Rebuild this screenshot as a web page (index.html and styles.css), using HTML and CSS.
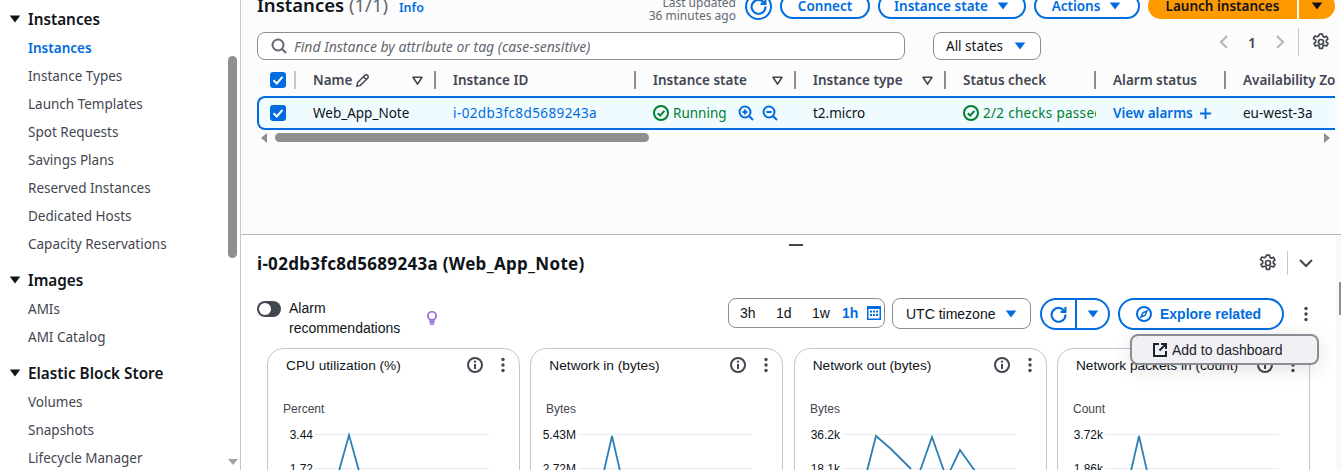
FILE: index.html
```html
<!DOCTYPE html>
<html lang="en">
<head>
    <meta charset="UTF-8">
    <title>Instances | EC2</title>
    <link rel="stylesheet" href="styles.css">
</head>
<body>

    <!-- Shared icons -->
    <svg class="icon-defs" width="0" height="0">
        <symbol id="i-caret" viewBox="0 0 16 16"><path d="M2 4h12L8 12z" fill="currentColor"/></symbol>
        <symbol id="i-filter" viewBox="0 0 16 16"><path d="M2.5 4h11L8 12.5z" fill="none" stroke="currentColor" stroke-width="2" stroke-linejoin="round"/></symbol>
        <symbol id="i-check" viewBox="0 0 16 16"><path d="M3.5 8.3 6.8 11.5 12.5 4.8" fill="none" stroke="#fff" stroke-width="2"/></symbol>
        <symbol id="i-ok" viewBox="0 0 16 16"><circle cx="8" cy="8" r="7" fill="none" stroke="currentColor" stroke-width="2"/><path d="M4.8 8.2 7.2 10.6 11.4 5.8" fill="none" stroke="currentColor" stroke-width="2"/></symbol>
        <symbol id="i-gear" viewBox="0 0 16 16"><path d="M6.7 1h2.6l.4 2 1.2.7 2-.7 1.3 2.3-1.5 1.3v1.4l1.5 1.3-1.3 2.3-2-.7-1.2.7-.4 2H6.7l-.4-2-1.2-.7-2 .7-1.3-2.3 1.5-1.3V6.3L1.3 5 2.6 2.7l2 .7 1.2-.7z" fill="none" stroke="currentColor" stroke-width="1.5" stroke-linejoin="round"/><circle cx="8" cy="8" r="2.2" fill="none" stroke="currentColor" stroke-width="1.5"/></symbol>
        <symbol id="i-info" viewBox="0 0 16 16"><circle cx="8" cy="8" r="7" fill="none" stroke="currentColor" stroke-width="2"/><path d="M8 7v5" stroke="currentColor" stroke-width="2"/><circle cx="8" cy="4.6" r="1.2" fill="currentColor"/></symbol>
        <symbol id="i-kebab" viewBox="0 0 16 16"><circle cx="8" cy="2.5" r="1.7" fill="currentColor"/><circle cx="8" cy="8" r="1.7" fill="currentColor"/><circle cx="8" cy="13.5" r="1.7" fill="currentColor"/></symbol>
        <symbol id="i-refresh" viewBox="0 0 16 16"><path d="M13.6 5A6.5 6.5 0 1 0 14.5 8" fill="none" stroke="currentColor" stroke-width="2"/><path d="M14.5 1v4.500H10" fill="none" stroke="currentColor" stroke-width="2"/></symbol>
    </svg>

    <div class="console">

        <!-- Left navigation -->
        <nav class="sidenav">
            <div class="nav-group"><svg class="nav-caret"><use href="#i-caret"/></svg>Instances</div>
            <a class="nav-link active">Instances</a>
            <a class="nav-link">Instance Types</a>
            <a class="nav-link">Launch Templates</a>
            <a class="nav-link">Spot Requests</a>
            <a class="nav-link">Savings Plans</a>
            <a class="nav-link">Reserved Instances</a>
            <a class="nav-link">Dedicated Hosts</a>
            <a class="nav-link">Capacity Reservations</a>
            <div class="nav-group"><svg class="nav-caret"><use href="#i-caret"/></svg>Images</div>
            <a class="nav-link">AMIs</a>
            <a class="nav-link">AMI Catalog</a>
            <div class="nav-group nav-group-ebs"><svg class="nav-caret"><use href="#i-caret"/></svg>Elastic Block Store</div>
            <a class="nav-link">Volumes</a>
            <a class="nav-link">Snapshots</a>
            <a class="nav-link">Lifecycle Manager</a>
            <div class="nav-thumb"></div>
            <svg class="nav-arrow" viewBox="0 0 10 6"><path d="M0 0h10L5 6z" fill="#a3a3a3"/></svg>
        </nav>

        <main class="content">

            <!-- Instances list -->
            <section class="list-pane">
                <header class="list-head">
                    <h1 class="list-title">Instances <span class="count">(1/1)</span> <a class="info-link">Info</a></h1>
                    <div class="updated">Last updated<br>36 minutes ago</div>
                    <button class="round-refresh"><svg><use href="#i-refresh"/></svg></button>
                    <button class="btn btn-connect">Connect</button>
                    <button class="btn btn-state">Instance state <svg class="btn-caret"><use href="#i-caret"/></svg></button>
                    <button class="btn btn-actions">Actions <svg class="btn-caret"><use href="#i-caret"/></svg></button>
                    <div class="launch">
                        <button class="launch-main">Launch instances</button>
                        <button class="launch-more"><svg class="btn-caret"><use href="#i-caret"/></svg></button>
                    </div>
                </header>

                <div class="filter-row">
                    <div class="search">
                        <svg viewBox="0 0 16 16"><circle cx="7" cy="7" r="5.5" fill="none" stroke="currentColor" stroke-width="2"/><path d="M11 11l4 4" stroke="currentColor" stroke-width="2"/></svg>
                        <span>Find Instance by attribute or tag (case-sensitive)</span>
                    </div>
                    <div class="state-select">All states <svg class="btn-caret"><use href="#i-caret"/></svg></div>
                    <div class="pager">
                        <svg class="pager-btn" viewBox="0 0 28 28"><path d="M17 8l-6 6 6 6" fill="none" stroke="#b4b4bb" stroke-width="2"/></svg>
                        <span class="pager-num">1</span>
                        <svg class="pager-btn" viewBox="0 0 28 28"><path d="M11 8l6 6-6 6" fill="none" stroke="#b4b4bb" stroke-width="2"/></svg>
                        <span class="pager-line"></span>
                        <svg class="pager-gear"><use href="#i-gear"/></svg>
                    </div>
                </div>

                <div class="table">
                    <div class="table-row table-header">
                        <div class="th th-check"><span class="checkbox"><svg><use href="#i-check"/></svg></span></div>
                        <div class="th"><span class="th-label">Name <svg class="pencil" viewBox="0 0 16 16"><path d="M2 14l.8-3.800L10.500 2.500a1.800 1.800 0 0 1 3 3l-7.700 7.700zM9 4l3 3" fill="none" stroke="currentColor" stroke-width="1.600"/></svg></span><svg class="filter"><use href="#i-filter"/></svg></div>
                        <div class="th">Instance ID</div>
                        <div class="th">Instance state<svg class="filter"><use href="#i-filter"/></svg></div>
                        <div class="th">Instance type<svg class="filter"><use href="#i-filter"/></svg></div>
                        <div class="th">Status check</div>
                        <div class="th">Alarm status</div>
                        <div class="th th-last">Availability Zone</div>
                    </div>
                    <div class="table-row selected">
                        <div class="td td-check"><span class="checkbox"><svg><use href="#i-check"/></svg></span></div>
                        <div class="td">Web_App_Note</div>
                        <div class="td"><a class="id-link">i-02db3fc8d5689243a</a></div>
                        <div class="td status-ok">
                            <svg class="ok"><use href="#i-ok"/></svg>Running
                            <span class="zoom-btns">
                                <svg viewBox="0 0 16 16"><circle cx="7" cy="7" r="5.5" fill="none" stroke="currentColor" stroke-width="2"/><path d="M11 11l4 4M4.500 7h5M7 4.500v5" stroke="currentColor" stroke-width="2"/></svg>
                                <svg viewBox="0 0 16 16"><circle cx="7" cy="7" r="5.5" fill="none" stroke="currentColor" stroke-width="2"/><path d="M11 11l4 4M4.500 7h5" stroke="currentColor" stroke-width="2"/></svg>
                            </span>
                        </div>
                        <div class="td">t2.micro</div>
                        <div class="td status-ok checks-cell"><svg class="ok"><use href="#i-ok"/></svg>2/2 checks passed</div>
                        <div class="td alarm-cell">View alarms <svg class="plus" viewBox="0 0 14 14"><path d="M7 1v12M1 7h12" stroke="currentColor" stroke-width="2"/></svg></div>
                        <div class="td">eu-west-3a</div>
                    </div>
                </div>

                <div class="hscroll">
                    <svg viewBox="0 0 6 10"><path d="M6 0v10L0 5z" fill="#8f8f8f"/></svg>
                    <div class="hscroll-thumb"></div>
                    <svg class="hscroll-end" viewBox="0 0 6 10"><path d="M0 0v10l6-5z" fill="#8f8f8f"/></svg>
                </div>
            </section>

            <!-- Instance details -->
            <section class="detail-pane">
                <span class="drag-handle"></span>
                <header class="detail-head">
                    <h2 class="detail-title">i-02db3fc8d5689243a (Web_App_Note)</h2>
                    <svg class="detail-gear"><use href="#i-gear"/></svg>
                    <span class="detail-line"></span>
                    <svg class="detail-chevron" viewBox="0 0 16 16"><path d="M2 5l6 6 6-6" fill="none" stroke="currentColor" stroke-width="2"/></svg>
                </header>

                <div class="toolbar">
                    <span class="toggle"><span class="toggle-dot"></span></span>
                    <span class="toggle-label">Alarm recommendations</span>
                    <svg class="bulb" viewBox="0 0 14 18"><circle cx="7" cy="6.500" r="4.800" fill="none" stroke="currentColor" stroke-width="2"/><path d="M5 11v2.500h4V11M4.500 16h5" fill="none" stroke="currentColor" stroke-width="2"/></svg>
                    <div class="time-range">
                        <span>3h</span><span>1d</span><span class="time-week">1w</span><span class="time-on">1h</span>
                        <svg class="calendar" viewBox="0 0 14 14"><path fill-rule="evenodd" d="M0 0h14v14H0zM1.500 3v9.500h11V3z" fill="currentColor"/><path d="M3 4.500h2v2H3zM6 4.500h2v2H6zM9 4.500h2v2H9zM3 8h2v2H3zM6 8h2v2H6zM9 8h2v2H9z" fill="currentColor"/></svg>
                    </div>
                    <div class="tz-select">UTC timezone <svg class="btn-caret"><use href="#i-caret"/></svg></div>
                    <div class="refresh-split">
                        <span class="refresh-left"><svg><use href="#i-refresh"/></svg></span>
                        <span class="refresh-right"><svg class="btn-caret"><use href="#i-caret"/></svg></span>
                    </div>
                    <button class="explore">
                        <svg viewBox="0 0 16 16"><circle cx="8" cy="8" r="7" fill="none" stroke="currentColor" stroke-width="2"/><path d="M11 5L9.200 9.200 5 11l1.800-4.200z" fill="none" stroke="currentColor" stroke-width="1.500"/></svg>
                        Explore related
                    </button>
                    <svg class="toolbar-kebab"><use href="#i-kebab"/></svg>
                </div>

                <div class="menu">
                    <svg viewBox="0 0 14 14"><path d="M6 1H1v12h12V8M8 1h5v5M13 1L6.500 7.500" fill="none" stroke="currentColor" stroke-width="2"/></svg>
                    Add to dashboard
                </div>

                <div class="charts">
                    <article class="chart-card">
                        <div class="card-head"><span class="card-title">CPU utilization (%)</span><svg class="card-info"><use href="#i-info"/></svg><svg class="card-kebab"><use href="#i-kebab"/></svg></div>
                        <svg class="plot" viewBox="0 0 253 75" width="253" height="75">
                            <text class="plot-unit" x="16" y="14">Percent</text>
                            <path class="plot-grid" d="M48 35.500h174M48 69.500h174"/>
                            <text class="plot-val" x="46" y="40">3.44</text><text class="plot-val" x="46" y="74">1.72</text>
                            <path class="plot-line" d="M72 72L82 36 92 72"/>
                        </svg>
                    </article>
                    <article class="chart-card">
                        <div class="card-head"><span class="card-title">Network in (bytes)</span><svg class="card-info"><use href="#i-info"/></svg><svg class="card-kebab"><use href="#i-kebab"/></svg></div>
                        <svg class="plot" viewBox="0 0 253 75" width="253" height="75">
                            <text class="plot-unit" x="16" y="14">Bytes</text>
                            <path class="plot-grid" d="M48 35.500h174M48 69.500h174"/>
                            <text class="plot-val" x="46" y="40">5.43M</text><text class="plot-val" x="46" y="74">2.72M</text>
                            <path class="plot-line" d="M74 72L82 37 90 72"/>
                        </svg>
                    </article>
                    <article class="chart-card">
                        <div class="card-head"><span class="card-title">Network out (bytes)</span><svg class="card-info"><use href="#i-info"/></svg><svg class="card-kebab"><use href="#i-kebab"/></svg></div>
                        <svg class="plot" viewBox="0 0 253 75" width="253" height="75">
                            <text class="plot-unit" x="16" y="14">Bytes</text>
                            <path class="plot-grid" d="M48 35.500h174M48 69.500h174"/>
                            <text class="plot-val" x="46" y="40">36.2k</text><text class="plot-val" x="46" y="74">18.1k</text>
                            <path class="plot-line" d="M73 72L82 37 97 50 117 70M126 72L138 38 150 72M156 72L166 51 181 72"/>
                        </svg>
                    </article>
                    <article class="chart-card">
                        <div class="card-head"><span class="card-title">Network packets in (count)</span><svg class="card-info"><use href="#i-info"/></svg><svg class="card-kebab"><use href="#i-kebab"/></svg></div>
                        <svg class="plot" viewBox="0 0 253 75" width="253" height="75">
                            <text class="plot-unit" x="16" y="14">Count</text>
                            <path class="plot-grid" d="M48 35.500h174M48 69.500h174"/>
                            <text class="plot-val" x="46" y="40">3.72k</text><text class="plot-val" x="46" y="74">1.86k</text>
                            <path class="plot-line" d="M74 72L82 37 90 72"/>
                        </svg>
                    </article>
                </div>

                <div class="page-scroll"><span class="page-thumb"></span></div>
            </section>
        </main>
    </div>

</body>
</html>
```

FILE: styles.css
```css
/* General styles */
html, body {
    margin: 0;
    height: 470px;
    overflow: hidden;
}

body {
    font-family: "Noto Sans", sans-serif;
    font-size: 14px;
    color: #0f141a;
    background-color: #fff;
}

button {
    font-family: inherit;
    padding: 0;
    cursor: pointer;
}

svg {
    display: block;
    flex: none;
}

.icon-defs {
    position: absolute;
}

.console {
    display: grid;
    grid-template-columns: 241px 1fr;
    height: 470px;
}

/* Left navigation */
.sidenav {
    position: relative;
    display: flex;
    flex-direction: column;
    padding: 6px 0 0 28px;
    border-right: 1px solid #c6c6cd;
    overflow: hidden;
}

.nav-group {
    position: relative;
    height: 28px;
    line-height: 26px;
    font-size: 15.3px;
    font-weight: 600;
    margin-top: 8.5px;
}

.nav-group:first-child {
    margin-top: 0;
}

.nav-group-ebs {
    margin-top: 9.5px;
}

.nav-caret {
    position: absolute;
    left: -20px;
    top: 6px;
    width: 14px;
    height: 14px;
}

.nav-link {
    height: 28px;
    line-height: 28px;
    font-size: 13.5px;
    color: #424650;
}

.nav-link.active {
    color: #006ce0;
    font-weight: 600;
}

.nav-thumb {
    position: absolute;
    left: 228px;
    top: 56px;
    width: 9px;
    height: 202px;
    border-radius: 5px;
    background-color: #8f8f8f;
}

.nav-arrow {
    position: absolute;
    left: 228px;
    top: 459px;
    width: 10px;
    height: 6px;
}

/* Instances list */
.content {
    display: grid;
    grid-template-rows: 235px 1fr;
    min-width: 0;
}

.list-pane {
    padding: 0 6px 0 16px;
    background-color: #fcfcfd;
    border-bottom: 1px solid #b4b4bb;
    box-sizing: border-box;
    min-width: 0;
}

.list-head {
    display: flex;
    align-items: flex-end;
    height: 32px;
    margin-top: -13px;
}

.list-title {
    margin: 0 auto 0 0;
    font-size: 18.5px;
    font-weight: 600;
    line-height: 36px;
    height: 32px;
}

.count {
    font-weight: 400;
    color: #656871;
}

.info-link {
    margin-left: 6px;
    font-size: 12.5px;
    font-weight: 600;
    color: #006ce0;
}

.updated {
    font-size: 12px;
    line-height: 13px;
    color: #656871;
    text-align: right;
    margin: 0 9px -3px 0;
}

.round-refresh {
    width: 27px;
    height: 27px;
    margin-bottom: -1px;
    border: 2px solid #006ce0;
    border-radius: 50%;
    background: none;
    color: #006ce0;
    display: flex;
    align-items: center;
    justify-content: center;
}

.round-refresh svg {
    width: 17px;
    height: 17px;
}

.btn {
    height: 26px;
    margin-left: 8px;
    border: 2px solid #006ce0;
    border-radius: 13px;
    background: #fff;
    color: #006ce0;
    font-size: 13.5px;
    font-weight: 600;
    display: flex;
    align-items: center;
    justify-content: center;
    gap: 8px;
}

.btn-connect {
    width: 90px;
}

.btn-state {
    width: 148px;
}

.btn-actions {
    width: 106px;
}

.btn-caret {
    width: 14px;
    height: 14px;
}

.launch {
    display: flex;
    gap: 2px;
    margin-left: 8px;
}

.launch button {
    height: 26px;
    border: 0;
    background-color: #ff9900;
    color: #0f141a;
    font-size: 13.5px;
    font-weight: 600;
}

.launch .launch-main {
    width: 149px;
    border-radius: 13px 0 0 13px;
}

.launch .launch-more {
    width: 36px;
    border-radius: 0 13px 13px 0;
    display: flex;
    align-items: center;
    justify-content: center;
}

/* Search row */
.filter-row {
    display: flex;
    align-items: center;
    height: 28px;
    margin-top: 13px;
}

.search {
    display: flex;
    align-items: center;
    gap: 7px;
    width: 648px;
    height: 28px;
    padding-left: 13px;
    box-sizing: border-box;
    border: 1px solid #8c8c94;
    border-radius: 8px;
    background-color: #fff;
    color: #656871;
    font-size: 14px;
    font-style: italic;
}

.search svg {
    width: 16px;
    height: 16px;
}

.state-select {
    display: flex;
    align-items: center;
    justify-content: space-between;
    width: 108px;
    height: 28px;
    margin-left: 28px;
    padding: 0 13px 0 12px;
    box-sizing: border-box;
    border: 1px solid #8c8c94;
    border-radius: 8px;
    background-color: #fff;
    font-size: 13.5px;
    color: #0f141a;
}

.state-select .btn-caret, .tz-select .btn-caret, .refresh-right .btn-caret {
    color: #006ce0;
}

.pager {
    display: flex;
    align-items: center;
    height: 28px;
    margin: -8px 0 0 auto;
}

.pager-btn {
    width: 28px;
    height: 28px;
}

.pager-num {
    width: 28px;
    text-align: center;
    font-weight: 600;
    color: #424650;
}

.pager-line {
    width: 1px;
    height: 28px;
    margin-left: 4px;
    background-color: #c6c6cd;
}

.pager-gear {
    width: 18px;
    height: 18px;
    margin: 0 5px 0 13px;
    color: #424650;
}

/* Table */
.table {
    margin-top: 11px;
    overflow: hidden;
}

.table-row {
    display: grid;
    grid-template-columns: 39px 140px 200px 160px 150px 150px 130px 109px;
}

.table-header {
    height: 18px;
    margin-bottom: 7px;
}

.th {
    display: flex;
    align-items: center;
    justify-content: space-between;
    padding: 0 10px 0 17px;
    box-sizing: border-box;
    border-right: 2px solid #8c8c94;
    font-size: 13.5px;
    font-weight: 600;
    color: #424650;
    white-space: nowrap;
    min-width: 0;
}

.th-check {
    padding-left: 13px;
    border-right-color: #c6c6cd;
}

.th-last {
    border-right: 0;
    padding-right: 0;
    overflow: hidden;
}

.th-label {
    display: flex;
    align-items: center;
    gap: 3px;
}

.pencil {
    width: 15px;
    height: 15px;
}

.filter {
    width: 13px;
    height: 13px;
}

.checkbox {
    display: block;
    width: 16px;
    height: 16px;
    border-radius: 3px;
    background-color: #006ce0;
}

.checkbox svg {
    width: 16px;
    height: 16px;
}

.selected {
    height: 34px;
    box-sizing: border-box;
    grid-template-columns: 37px 140px 200px 160px 150px 150px 130px 109px;
    border: 2px solid #006ce0;
    border-right: 0;
    border-radius: 8px 0 0 8px;
    background-color: #f0fbff;
}

.td {
    display: flex;
    align-items: center;
    padding-left: 17px;
    font-size: 13.5px;
    white-space: nowrap;
    overflow: hidden;
    min-width: 0;
}

.td-check {
    padding-left: 11px;
}

.id-link {
    color: #006ce0;
    letter-spacing: 0.4px;
}

.status-ok {
    color: #00802f;
}

.checks-cell {
    letter-spacing: 0.3px;
}

.ok {
    width: 16px;
    height: 16px;
    margin-right: 4px;
}

.zoom-btns {
    display: flex;
    gap: 8px;
    margin-left: 11px;
    color: #006ce0;
}

.zoom-btns svg {
    width: 16px;
    height: 16px;
}

.alarm-cell {
    gap: 6px;
    color: #006ce0;
    font-weight: 600;
}

.plus {
    width: 13px;
    height: 13px;
}

.hscroll {
    display: flex;
    align-items: center;
    height: 9px;
    margin-top: 3px;
    padding: 0 5px 0 4px;
}

.hscroll svg {
    width: 6px;
    height: 10px;
}

.hscroll-thumb {
    width: 374px;
    height: 9px;
    margin-left: 8px;
    border-radius: 5px;
    background-color: #8f8f8f;
}

.hscroll .hscroll-end {
    margin-left: auto;
}

/* Details */
.detail-pane {
    position: relative;
    padding: 0 0 0 16px;
    overflow: hidden;
}

.drag-handle {
    position: absolute;
    left: 548px;
    top: 9px;
    width: 14px;
    height: 2px;
    background-color: #424650;
}

.detail-head {
    display: flex;
    align-items: center;
    height: 26px;
    padding-top: 15px;
}

.detail-title {
    margin: 0 auto 0 0;
    font-size: 17px;
    font-weight: 700;
    letter-spacing: 0.3px;
}

.detail-gear {
    width: 18px;
    height: 18px;
    color: #424650;
}

.detail-line {
    width: 1px;
    height: 24px;
    margin-left: 10px;
    background-color: #c6c6cd;
}

.detail-chevron {
    width: 16px;
    height: 16px;
    margin: 0 27px 0 10px;
    color: #424650;
}

.toolbar {
    display: flex;
    align-items: flex-start;
    height: 32px;
    margin-top: 22px;
    font-family: "Liberation Sans", Arial, sans-serif;
}

.toggle {
    display: block;
    width: 24px;
    height: 16px;
    margin-top: 3px;
    border-radius: 8px;
    background-color: #424650;
    position: relative;
}

.toggle-dot {
    position: absolute;
    left: 2px;
    top: 2px;
    width: 12px;
    height: 12px;
    border-radius: 50%;
    background-color: #fff;
}

.toggle-label {
    width: 125px;
    margin-left: 8px;
    line-height: 20px;
    font-size: 14px;
    color: #0f141a;
}

.bulb {
    width: 12px;
    height: 16px;
    margin: 12px 0 0 12px;
    color: #9469d6;
}

.time-range {
    display: flex;
    align-items: center;
    width: 157px;
    height: 30px;
    margin-left: 290px;
    padding-left: 11px;
    box-sizing: border-box;
    border: 1px solid #8c8c94;
    border-radius: 8px;
    font-size: 14px;
}

.time-range span {
    width: 36px;
}

.time-range .time-week {
    width: 30px;
}

.time-range .time-on {
    width: 25px;
    color: #006ce0;
    font-weight: 700;
}

.calendar {
    width: 14px;
    height: 14px;
    color: #006ce0;
}

.tz-select {
    display: flex;
    align-items: center;
    justify-content: space-between;
    width: 139px;
    height: 31px;
    margin-left: 7px;
    padding: 0 12px 0 13px;
    box-sizing: border-box;
    border: 1px solid #8c8c94;
    border-radius: 8px;
    font-size: 14px;
}

.refresh-split {
    display: flex;
    width: 70px;
    height: 32px;
    margin-left: 9px;
    box-sizing: border-box;
    border: 2px solid #006ce0;
    border-radius: 16px;
    color: #006ce0;
}

.refresh-left {
    display: flex;
    align-items: center;
    justify-content: center;
    width: 33px;
    border-right: 2px solid #006ce0;
}

.refresh-left svg {
    width: 17px;
    height: 17px;
}

.refresh-right {
    flex: 1;
    display: flex;
    align-items: center;
    justify-content: center;
}

.explore {
    display: flex;
    align-items: center;
    gap: 8px;
    width: 166px;
    height: 32px;
    margin-left: 8px;
    padding-left: 16px;
    box-sizing: border-box;
    border: 2px solid #006ce0;
    border-radius: 16px;
    background: #fff;
    color: #006ce0;
    font-family: inherit;
    font-size: 14px;
    font-weight: 700;
}

.explore svg {
    width: 16px;
    height: 16px;
}

.toolbar-kebab {
    width: 16px;
    height: 16px;
    margin: 8px 0 0 14px;
    color: #424650;
}

/* Overflow menu */
.menu {
    position: absolute;
    left: 889px;
    top: 99px;
    z-index: 2;
    display: flex;
    align-items: center;
    gap: 5px;
    width: 189px;
    height: 31px;
    padding-left: 21px;
    box-sizing: border-box;
    border: 2px solid #8c8c94;
    border-radius: 8px;
    background-color: #f0f0f5;
    box-shadow: 0 4px 20px rgba(0, 7, 22, 0.12);
    font-family: "Liberation Sans", Arial, sans-serif;
    font-size: 14px;
    color: #1b232d;
}

.menu svg {
    width: 14px;
    height: 14px;
}

/* Metric cards */
.charts {
    display: grid;
    grid-template-columns: repeat(4, 253px);
    column-gap: 10.33px;
    margin: 18px 0 0 10px;
}

.chart-card {
    height: 180px;
    box-sizing: border-box;
    border: 1px solid #c6c6cd;
    border-radius: 16px;
    font-family: "Liberation Sans", Arial, sans-serif;
}

.card-head {
    display: flex;
    align-items: center;
    height: 16px;
    margin: 8px 0 0 18px;
}

.card-title {
    font-size: 13.7px;
    margin-right: auto;
    white-space: nowrap;
}

.card-info {
    width: 16px;
    height: 16px;
    color: #424650;
}

.card-kebab {
    width: 16px;
    height: 16px;
    margin: 0 8px 0 12px;
    color: #424650;
}

.plot {
    margin: 26px 0 0 -1px;
}

.plot-unit {
    font-size: 12px;
    fill: #424650;
}

.plot-val {
    font-size: 12px;
    fill: #0f141a;
    text-anchor: end;
}

.plot-grid {
    fill: none;
    stroke: #e9ebed;
    stroke-width: 1;
}

.plot-line {
    fill: none;
    stroke: #2e7fb5;
    stroke-width: 1.8;
}

/* Page scrollbar */
.page-scroll {
    position: absolute;
    right: 0;
    top: 0;
    width: 5px;
    height: 235px;
    background-color: #f9f9f9;
}

.page-thumb {
    position: absolute;
    left: 3px;
    top: 47px;
    width: 2px;
    height: 33px;
    background-color: #8f8f8f;
}
```
